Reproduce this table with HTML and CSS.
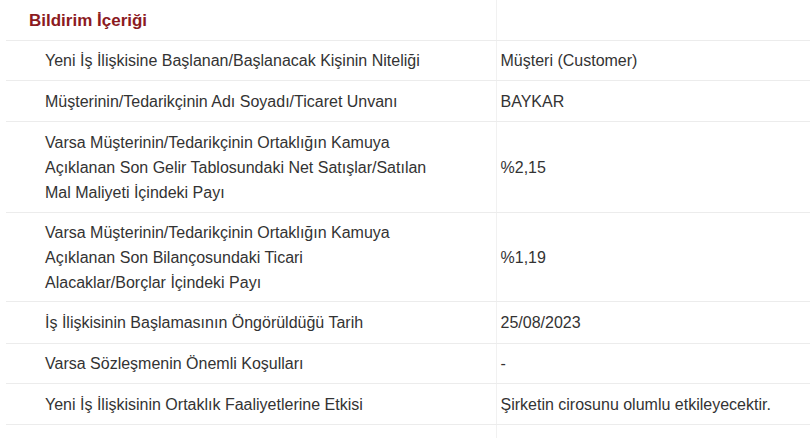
FILE: index.html
```html
<!DOCTYPE html>
<html lang="tr">
<head>
<meta charset="utf-8">
<link rel="stylesheet" href="styles.css">
</head>
<body>
<div class="wrap">
<table class="notice">
  <colgroup><col class="c-label"><col class="c-value"></colgroup>
  <tr class="head">
    <td class="title">Bildirim İçeriği</td>
    <td></td>
  </tr>
  <tr class="r40">
    <td class="label">Yeni İş İlişkisine Başlanan/Başlanacak Kişinin Niteliği</td>
    <td class="value">Müşteri (Customer)</td>
  </tr>
  <tr class="r41">
    <td class="label">Müşterinin/Tedarikçinin Adı Soyadı/Ticaret Unvanı</td>
    <td class="value">BAYKAR</td>
  </tr>
  <tr class="r91">
    <td class="label">Varsa Müşterinin/Tedarikçinin Ortaklığın Kamuya<br>Açıklanan Son Gelir Tablosundaki Net Satışlar/Satılan<br>Mal Maliyeti İçindeki Payı</td>
    <td class="value">%2,15</td>
  </tr>
  <tr class="r89">
    <td class="label">Varsa Müşterinin/Tedarikçinin Ortaklığın Kamuya<br>Açıklanan Son Bilançosundaki Ticari<br>Alacaklar/Borçlar İçindeki Payı</td>
    <td class="value">%1,19</td>
  </tr>
  <tr class="r42">
    <td class="label">İş İlişkisinin Başlamasının Öngörüldüğü Tarih</td>
    <td class="value">25/08/2023</td>
  </tr>
  <tr class="r40">
    <td class="label">Varsa Sözleşmenin Önemli Koşulları</td>
    <td class="value">-</td>
  </tr>
  <tr class="r41">
    <td class="label">Yeni İş İlişkisinin Ortaklık Faaliyetlerine Etkisi</td>
    <td class="value">Şirketin cirosunu olumlu etkileyecektir.</td>
  </tr>
  <tr class="tail">
    <td></td>
    <td></td>
  </tr>
</table>
</div>
</body>
</html>
```

FILE: styles.css
```css
html, body {
  margin: 0;
  padding: 0;
  background: #ffffff;
}
.wrap {
  padding-left: 6px;
}
.notice {
  width: 804px;
  border-collapse: collapse;
  table-layout: fixed;
  font-family: "Liberation Sans", Arial, sans-serif;
  font-size: 16px;
  color: #333333;
}
.c-label { width: 490px; }
.notice td {
  padding: 0;
  vertical-align: middle;
  line-height: 25px;
  border-bottom: 1px solid #ececec;
}
.notice td:first-child {
  border-right: 1px solid #f1f1f1;
}
.head td { height: 40px; }
.title {
  padding-left: 23px !important;
  color: #8c1b1f;
  font-weight: bold;
  font-size: 17px;
}
.label { padding-left: 39px !important; }
.value { padding-left: 4px !important; }
.r40 td { height: 39px; }
.r41 td { height: 40px; }
.r42 td { height: 41px; }
.r89 td { height: 88px; }
.r91 td { height: 90px; }
.tail td { height: 20px; border-bottom: none; }
```
